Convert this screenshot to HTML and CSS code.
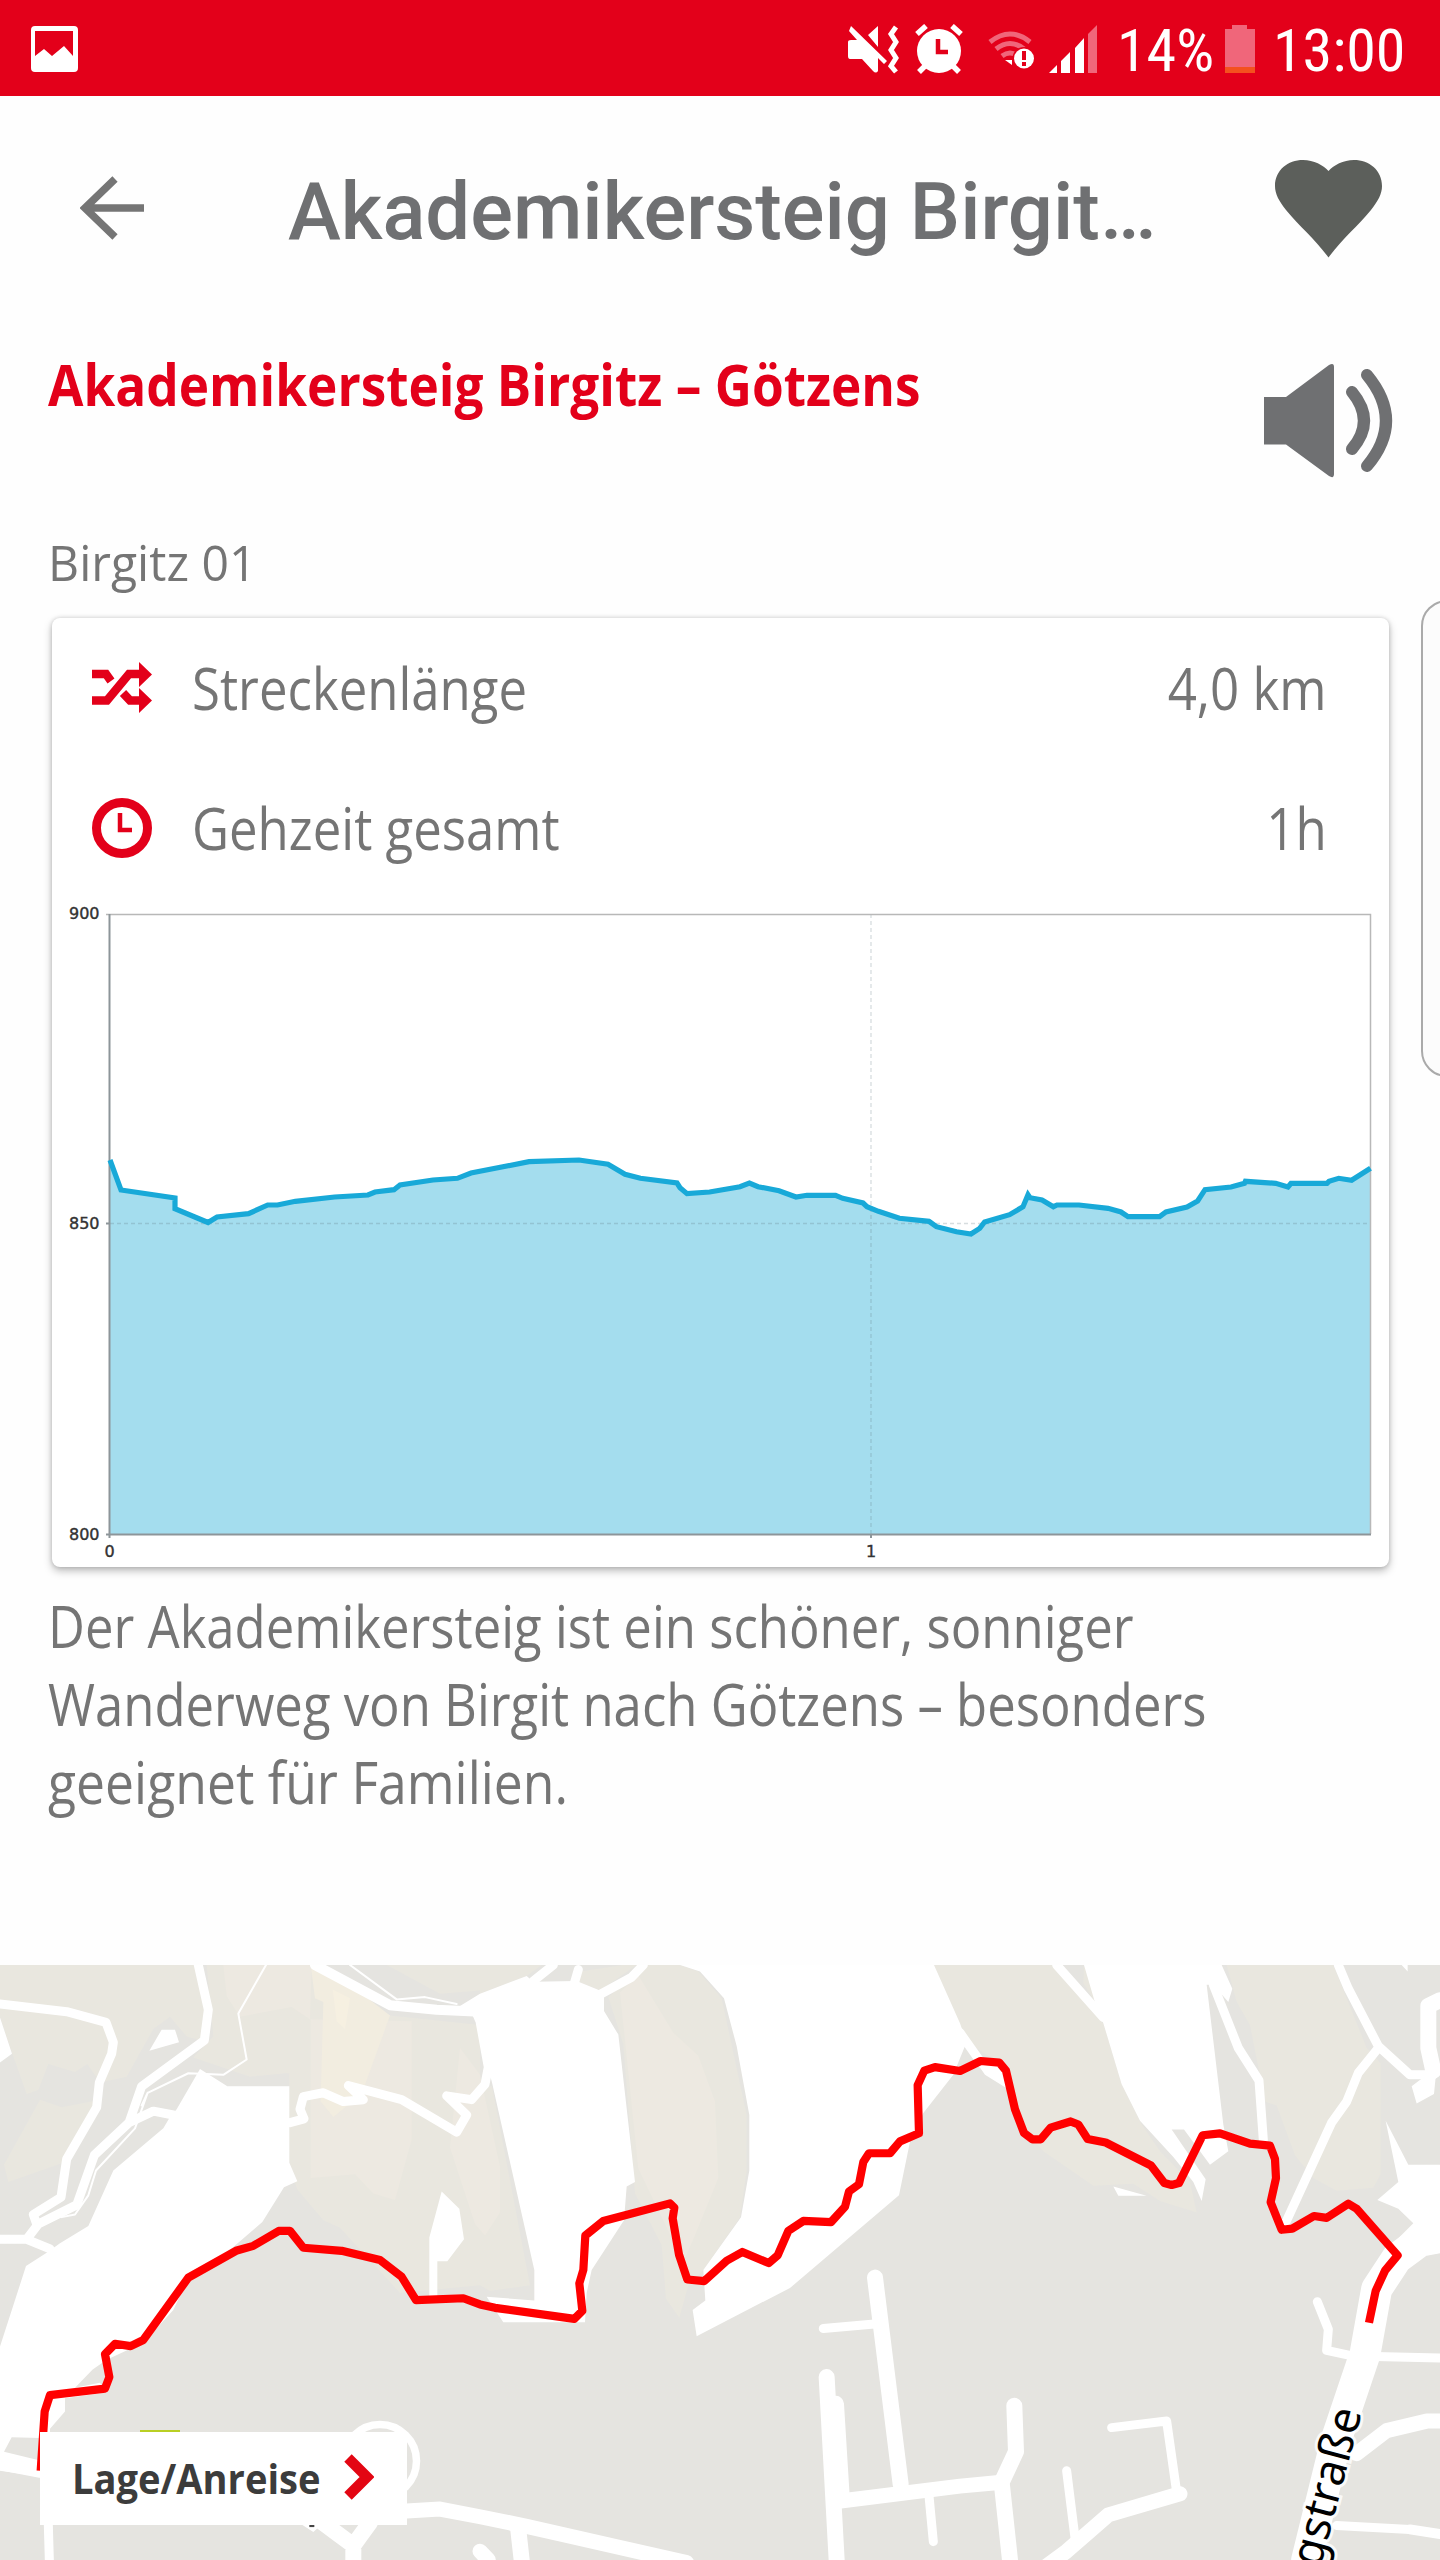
FILE: index.html
```html
<!DOCTYPE html>
<html lang="de">
<head>
<meta charset="utf-8">
<title>Akademikersteig Birgitz</title>
<link rel="stylesheet" href="styles.css">
</head>
<body>
<div class="status">
  <svg class="shot" viewBox="0 0 48 47"><path fill="#fff" fill-rule="evenodd" d="M4 0H43Q47 0 47 4V42Q47 46 43 46H4Q0 46 0 42V4Q0 0 4 0ZM4 5V30L13 23L21 30L33 20L42 30V5Z"/></svg>
  <svg class="tray" viewBox="846 24 252 52">
    <g fill="#fff">
      <path d="M868 35L878 26V47ZM851 26L887 61L884 64L878 58V71Q876 74 873 71L862 59H850Q848 59 848 56V42Q848 40 851 40H857L849 31Z"/>
      <path d="M896 27L891 34L896 42L891 50L896 58L891 66L896 72" fill="none" stroke="#fff" stroke-width="5"/>
      <circle cx="939" cy="51" r="22"/><path d="M917 34L926 26M952 26L961 34M925 66L919 72M953 66L959 72" stroke="#fff" stroke-width="5.5"/>
    </g>
    <path d="M938 39V52H948" fill="none" stroke="#e3001a" stroke-width="4.5"/>
    <g fill="none" stroke="#f0667a" stroke-width="5"><path d="M990 42Q1010 26 1030 42M996 49Q1010 38 1024 49M1002 56Q1010 50 1018 56"/></g>
    <path d="M1005 60H1012V65Z" fill="#fff"/><circle cx="1024" cy="58.500" r="11.500" fill="#e3001a"/><circle cx="1024" cy="58.500" r="10" fill="#fff"/><path d="M1024 51V60M1024 62V66" stroke="#e3001a" stroke-width="4"/>
    <path d="M1049 73L1057 65V73ZM1061 73V61L1070 52V73ZM1075 73V48L1084 38V73Z" fill="#fff"/><path d="M1088 73V34L1097 25V73Z" fill="#f0667a"/>
  </svg>
  <span class="pct">14%</span>
  <svg class="batt" viewBox="0 0 32 48"><path d="M1 4H8V0H23V4H31V48H1Z" fill="#f0667a"/><path d="M1 42H31V48H1Z" fill="#f4511e"/></svg>
  <span class="time">13:00</span>
</div>
<header class="bar">
  <svg class="back" viewBox="0 0 64 64"><path d="M35 3L5 32L35 61M6 32H64" fill="none" stroke="#757575" stroke-width="7.500"/></svg>
  <h1>Akademikersteig Birgit…</h1>
  <svg class="heart" viewBox="0 0 107 98"><path d="M53.500 97.500C40 79 25 67 11 50C4 41 0 34 0 26C0 10 13 0 28 0C39 0 48 5 53.500 11C59 5 68 0 79 0C94 0 107 10 107 26C107 34 103 41 96 50C82 67 67 79 53.500 97.500Z" fill="#5c5f5b"/></svg>
</header>
<section class="intro">
  <h2>Akademikersteig Birgitz – Götzens</h2>
  <svg class="speaker" viewBox="1264 363 130 115"><path d="M1264 397H1286L1329 365Q1334 362 1334 367V474Q1334 479 1329 476L1286 444.500H1264Z" fill="#6f7072"/><path d="M1352 392Q1376 421 1352 449M1367 375Q1405 421 1367 466" fill="none" stroke="#6f7072" stroke-width="12" stroke-linecap="round"/></svg>
</section>
<p class="sub">Birgitz 01</p>
<main class="card">
  <div class="row">
    <svg class="ico" viewBox="92 659 60 60"><g fill="none" stroke="#e3001a" stroke-width="8.500"><path d="M92 675H106L111 682M92 701.500H107L129 675H142M123 694L130 701.500H142"/></g><path d="M139 663L152 675.500L139 688ZM139 689L152 701.500L139 714Z" fill="#e3001a"/></svg>
    <span class="label">Streckenlänge</span><span class="value">4,0 km</span>
  </div>
  <div class="row">
    <svg class="ico" viewBox="0 0 60 60"><circle cx="30" cy="30" r="25.500" fill="none" stroke="#e3001a" stroke-width="9"/><path d="M28 15V32H40" fill="none" stroke="#e3001a" stroke-width="4.500"/></svg>
    <span class="label">Gehzeit gesamt</span><span class="value">1h</span>
  </div>
  <svg class="chart" viewBox="52 898 1337 669">
    <path class="area" d="M110 1534V1160L121 1190L175 1198V1208.700L208 1222.500L217 1217L248.500 1213.700L267.700 1205H277.500L295.400 1201.300L334.600 1197L368 1195L375 1192L394 1189.700L400 1185L433 1180L457.400 1178.300L471 1173L529 1161.700L579 1160L608 1164.300L625 1174.300L640.400 1178.300L677 1183L680 1187.700L687 1193.700L709.600 1192L740 1186.700L749.400 1183L758 1186.700L779 1190.700L796 1197L807 1195.300H835.500L842.700 1198.300L863 1203L867 1206.700L878.400 1211.300L899.400 1218.300L929 1221.300L936.400 1226.700L956.500 1231.700L971 1234L979.700 1228.300L984.600 1222L1009.600 1214.700L1023 1206.700L1028 1194.700L1030 1197.700L1042 1200L1053.400 1206.700L1057 1205H1079L1108 1208.300L1121 1212L1128 1216.700H1159.600L1166 1212L1187 1207L1197.600 1201L1205 1189.700L1231 1187L1244.500 1183.300L1245.400 1181.300L1275.700 1183.300L1288 1187L1291 1183.300H1327L1329 1181.300L1338.700 1178.300L1351.600 1180.300L1370.500 1168.300V1534Z"/>
    <path class="grid" d="M110 1223.500H1370M871 914V1534"/>
    <path class="frame" d="M106 914.500H1370.500V1534"/>
    <path class="axis" d="M109.500 914V1538M106 1534.500H1371M106 1223.500H110M871 1534V1538"/>
    <path class="line" d="M110 1160L121 1190L175 1198V1208.700L208 1222.500L217 1217L248.500 1213.700L267.700 1205H277.500L295.400 1201.300L334.600 1197L368 1195L375 1192L394 1189.700L400 1185L433 1180L457.400 1178.300L471 1173L529 1161.700L579 1160L608 1164.300L625 1174.300L640.400 1178.300L677 1183L680 1187.700L687 1193.700L709.600 1192L740 1186.700L749.400 1183L758 1186.700L779 1190.700L796 1197L807 1195.300H835.500L842.700 1198.300L863 1203L867 1206.700L878.400 1211.300L899.400 1218.300L929 1221.300L936.400 1226.700L956.500 1231.700L971 1234L979.700 1228.300L984.600 1222L1009.600 1214.700L1023 1206.700L1028 1194.700L1030 1197.700L1042 1200L1053.400 1206.700L1057 1205H1079L1108 1208.300L1121 1212L1128 1216.700H1159.600L1166 1212L1187 1207L1197.600 1201L1205 1189.700L1231 1187L1244.500 1183.300L1245.400 1181.300L1275.700 1183.300L1288 1187L1291 1183.300H1327L1329 1181.300L1338.700 1178.300L1351.600 1180.300L1370.500 1168.300"/>
    <g class="ticks"><text x="69" y="919">900</text><text x="69" y="1229">850</text><text x="69" y="1540">800</text><text x="104.500" y="1557">0</text><text x="866" y="1557">1</text></g>
  </svg>
</main>
<p class="text"><span>Der Akademikersteig ist ein schöner, sonniger</span><span>Wanderweg von Birgit nach Götzens – besonders</span><span class="last">geeignet für Familien.</span></p>
<section class="map">
  <svg class="mapview" viewBox="0 0 1440 595">
    <g transform="translate(0 -5) scale(.33333 .38265)">
      <g class="warm">
        <path d="M0 13H585L620 130L600 210L560 200L510 148L460 180L380 305L300 320L262 272L225 293L145 272L115 340L80 350L35 240L0 150ZM620 13H935L1170 145L1440 170V850L1200 870L1020 700L970 680L892 600L868 540V295L750 305L580 255L640 200ZM120 365L185 385L300 365L190 530L25 580L12 535ZM1160 13H1440V80L1320 88Z"/>
        <path d="M1440 13H1625L1580 42L1440 88ZM1740 30L1870 13H1910L1800 80L1730 55ZM1440 330H1476L1590 850L1470 865L1440 850ZM1825 97L1940 13H2040L2095 30L2165 100L2240 405V550L2220 672L2110 810L2065 850L2038 935L1998 885L1985 745L1905 610L1870 220Z"/>
        <path d="M2802 13H3155L3310 165L3365 325L3425 430L3480 500L3570 580L3590 660L3480 630L3400 585L3280 590L3130 500L3070 440L3020 280L2900 215ZM3252 13H3270L3285 110L3250 60ZM3680 13H4000L4100 230L4142 270V560L4120 595L4010 603L3940 570L3885 510L3830 380L3795 370L3750 170L3710 110Z"/>
      </g>
      <path class="peach" d="M670 13H935L930 155L875 123L720 148L680 95ZM932 155L1235 160V470L1185 627L1120 610L1065 560L932 570ZM1380 230L1440 300L1500 540V660L1455 720L1425 690L1350 490ZM1860 85L1915 40L2020 190L2095 250L2145 370L2155 570L2080 730L2050 790L1915 545Z"/>
      <path class="cream" d="M932 13L1000 30L1170 145L1085 350L1000 410L962 370L970 110L945 100Z"/><path fill="#f6f0e1" d="M998 77L1050 100L1035 180L1010 160Z"/>
      <g class="open">
        <path d="M0 150L36 245L0 268ZM448 237L485 182H525L537 215ZM600 285L682 330H868V530L892 578L852 594L787 685L700 750L560 840L520 915L430 1000L320 1045L278 1070L225 1118L300 1105L320 1130L195 1145V1180L150 1225V1250L35 1247L12 1285L120 1308V1350L0 1335V1010L78 800L140 765L180 740L265 695L340 550L490 440L510 410L530 390ZM1325 605L1378 650L1392 730L1342 787H1312V880H1288V725Z"/>
        <path d="M1380 120L1440 88L1580 42L1600 57L1730 55L1800 80L1812 97V133L1855 195L1905 580L1880 592L1872 680L1775 810L1760 870L1755 947H1510L1460 880L1603 890V810L1476 320L1462 275L1440 190L1430 155Z"/>
        <path d="M2040 13L2100 30L2172 100L2210 225L2248 405V550L2223 672L2110 810L2116 890L2078 915L2090 983L2370 857L2697 615L2730 475L2770 400L2860 300L2895 225L2955 300L3020 335V280L2940 265L2900 215L2880 165L2802 13Z"/>
        <path d="M3252 13L3283 105L3310 165L3365 325L3420 420L3520 515L3580 580L3605 630L3617 573L3515 443H3552L3630 535L3685 500L3670 430L3620 65H3640L3685 110L3697 75L3665 13ZM3340 592L3440 616H3355ZM4157 420L4225 535H4320V765L4270 772L4225 800L4180 740L4240 688L4195 650L4132 627L4195 580ZM4235 330L4310 280L4302 350L4250 375ZM4205 13H4223V30Z"/>
      </g>
      <g class="road r9">
        <path d="M0 115L200 135L318 163L340 215L335 245L298 320L290 385L200 520L183 620L100 665L110 690M595 13L625 130L613 210L425 330L387 425L283 510L230 640L115 690L80 730H0M80 730L150 755M387 425L460 395L520 405M870 425L912 415L900 390L910 357L970 347L1030 370L1090 365L1045 328L1205 365L1370 450L1400 405L1340 355L1415 365L1455 325L1465 280L1440 160L1425 130"/>
        <path d="M145 1477L148 1568M1800 90L1895 45L1930 13M1720 70L1735 25M1600 55L1660 13M2470 963L2640 950M2787 1400L2800 1520M3200 1335L3225 1510M3335 1222L3500 1205L3530 1390M3170 13L3310 150M2880 190L2945 270M3640 65L3715 230L3777 315L3790 470M4015 13L4045 75L4135 225L4230 300H4300M4135 230L4075 295L4040 370L3995 425L3855 690M3952 893L3985 965L3980 1020L4060 1035L4320 1040M4010 1478L4230 1488"/>
      </g>
      <path class="road thin" d="M798 13L715 140L740 260L670 300L565 296L443 347L405 440L288 550L265 615L225 665L185 672M1050 13L1190 103L1275 97L1370 115M425 380L443 347"/>
      <path class="road r10" d="M945 13L1170 118L1310 130L1440 135M4230 1488L4320 1500M0 1320L120 1340"/>
      <path class="road r14" d="M1220 1440L1320 1435L1440 1455L1580 1480L2060 1575M2510 1415L2880 1375L3005 1365M3130 1590L3200 1545L3325 1450L3540 1395M4070 1290L4160 1230L4280 1205H4320M1440 1545L1465 1568"/>
      <path class="road r16" d="M1555 1490L1565 1568M960 1465L1060 1530V1568M1060 1530L1110 1470M2480 1090L2510 1568M2508 1160L2525 1400M2625 830L2702 1370M3043 1165L3048 1285L3005 1365L3030 1568M4320 105L4285 120V230L4300 290"/>
      <path class="road main" d="M4320 725L4260 735L4190 780L4130 860L4095 1030L4010 1250L3920 1568"/>
      <path fill="#b9cf24" d="M420 1228H540V1240H420Z"/><path class="open" d="M905 1475L940 1495L965 1475Z"/><path fill="#444" d="M928 1474H943V1482H928Z"/>
      <path class="route" d="M122 1335L134 1180L150 1137L315 1120L328 1090L315 1030L345 1003L392 1009L430 993L565 830L708 760L760 747L836 708H870L910 752L1025 760L1140 784L1205 828L1248 889L1390 884L1440 900L1485 909L1723 938L1747 917L1738 845L1750 810L1756 720L1810 682L2010 636L2023 647L2018 675L2037 770L2062 835L2113 839L2180 786L2227 763L2306 792L2333 772L2365 708L2410 682L2493 685L2535 645L2547 605L2577 586L2590 528L2607 505H2670L2700 474L2757 453L2753 327L2773 289L2805 280L2880 290L2942 264L2998 268L3018 289L3045 390L3072 452L3098 469H3122L3152 438L3212 422L3235 430L3263 468L3317 477L3453 537L3493 583L3515 588L3537 583L3608 458L3660 453L3750 480L3810 485L3825 520L3828 570L3812 633L3845 705L3877 702L3942 669L3980 674L4045 637L4070 650L4193 772L4155 812L4127 865L4107 948"/>
    </g>
    <circle cx="380" cy="496" r="36.500" fill="none" stroke="#fff" stroke-width="7.500"/>
    <text class="street" transform="translate(1362 447) rotate(-75)" text-anchor="end">gstraße</text>
  </svg>
  <a class="go"><span>Lage/Anreise</span><svg viewBox="0 0 30 46"><path d="M4 4L23 23L4 42" fill="none" stroke="#e30613" stroke-width="10.500"/></svg></a>
</section>
<div class="handle"></div>
</body>
</html>
```
FILE: styles.css
```css
* { box-sizing: border-box; }
body { margin: 0; width: 1440px; height: 2560px; overflow: hidden; position: relative; background: #fefefe; color: #757575; font-family: "Open Sans", "Noto Sans", sans-serif; display: flex; flex-direction: column; }
h1, h2, p { margin: 0; font-weight: 400; }
svg { display: block; flex: none; }
.status { height: 96px; flex: none; background: #e3001a; display: flex; align-items: flex-start; color: #fff; font: 400 60px/70px Roboto, sans-serif; font-stretch: 85%; white-space: nowrap; }
.shot { width: 48px; height: 47px; margin: 26px 767px 0 31px; }
.tray { width: 252px; height: 52px; margin-top: 24px; }
.pct, .time { margin-top: 16px; transform-origin: 0 0; }
.pct { width: 100px; margin-left: 19px; }
.batt { width: 32px; height: 48px; margin-top: 25px; margin-left: 7px; }
.time { margin-left: 17px; }
.bar { height: 228px; flex: none; display: flex; align-items: flex-start; }
.back { width: 64px; height: 64px; margin: 80px 0 0 80px; }
.bar h1 { width: 986px; margin: 69px 0 0 144px; font: 500 79.700px/94px Roboto, sans-serif; color: #6f7072; white-space: nowrap; }
.heart { width: 107px; height: 98px; margin: 64px 0 0 1px; }
.intro { height: 206px; flex: none; display: flex; justify-content: space-between; padding: 21px 46px 0 48px; }
.intro h2 { width: 900px; font-size: 57.500px; line-height: 78px; font-weight: 700; color: #e3001a; white-space: nowrap; transform: scaleX(.893); transform-origin: 0 0; }
.speaker { width: 130px; height: 115px; margin-top: 18px; }
.sub { height: 88px; flex: none; padding-left: 50px; font-size: 50px; line-height: 64px; transform: scaleX(.962); transform-origin: 0 0; }
.card { width: 1337px; height: 949px; flex: none; margin-left: 52px; border-radius: 8px; background: #fff; box-shadow: 0 4px 9px rgba(0,0,0,.26), 0 0 4px rgba(0,0,0,.16); }
.row { height: 140px; display: flex; align-items: center; padding: 0 62px 0 40px; font-size: 58px; line-height: 78px; }
.ico { width: 60px; height: 60px; }
.label { margin-left: 40px; flex: 1; transform: scaleX(.878); transform-origin: 0 0; }
.value { transform: scaleX(.88); transform-origin: 100% 0; }
.chart { width: 1337px; height: 669px; }
.area { fill: #a4ddee; }
.line { fill: none; stroke: #18a9d8; stroke-width: 5.200; }
.grid { fill: none; stroke: #607880; stroke-opacity: .25; stroke-width: 1.300; stroke-dasharray: 4 3; }
.frame { fill: none; stroke: #b8b8b8; stroke-width: 1.500; }
.axis { fill: none; stroke: #8d9599; stroke-width: 2; }
.ticks { font: 16px "DejaVu Sans", sans-serif; fill: #333; stroke: #333; stroke-width: .4; }
.text { height: 398px; flex: none; padding: 20px 0 0 48px; font-size: 58px; line-height: 78px; white-space: nowrap; }
.text span { display: block; width: max-content; transform: scaleX(.877); transform-origin: 0 0; }
.text .last { transform: scaleX(.891); }
.map { height: 595px; flex: none; position: relative; background: #e5e4e0; overflow: hidden; }
.mapview { width: 1440px; height: 595px; }
.warm { fill: #e9e7df; }
.peach { fill: #ede9e1; }
.cream { fill: #f2ede0; }
.open { fill: #fff; }
.road { fill: none; stroke: #fff; stroke-linecap: round; stroke-linejoin: round; }
.road, .r9 path, .route { vector-effect: non-scaling-stroke; }
.thin { stroke-width: 2; }
.r9 { stroke-width: 9; }
.r10 { stroke-width: 10; }
.r14 { stroke-width: 15; }
.r16 { stroke-width: 16; }
.main { stroke-width: 31; }
.route { fill: none; stroke: #f00; stroke-width: 8.200; stroke-linejoin: round; }
.street { font: 45px "Noto Sans", sans-serif; fill: #000; stroke: #fff; stroke-width: 6; stroke-opacity: .8; paint-order: stroke; }
.go { position: absolute; left: 40px; top: 467px; width: 367px; height: 93px; background: #fff; display: flex; align-items: center; padding: 0 33px 3px 32px; justify-content: space-between; color: #3c3c3c; font-size: 42px; font-weight: 700; white-space: nowrap; }
.go span { width: 250px; transform: scaleX(.907); transform-origin: 0 50%; }
.go svg { width: 30px; height: 46px; }
.handle { position: absolute; left: 1421px; top: 600px; width: 60px; height: 477px; border: 2px solid #aaa; border-radius: 26px; background: #fcfcfc; }
```
